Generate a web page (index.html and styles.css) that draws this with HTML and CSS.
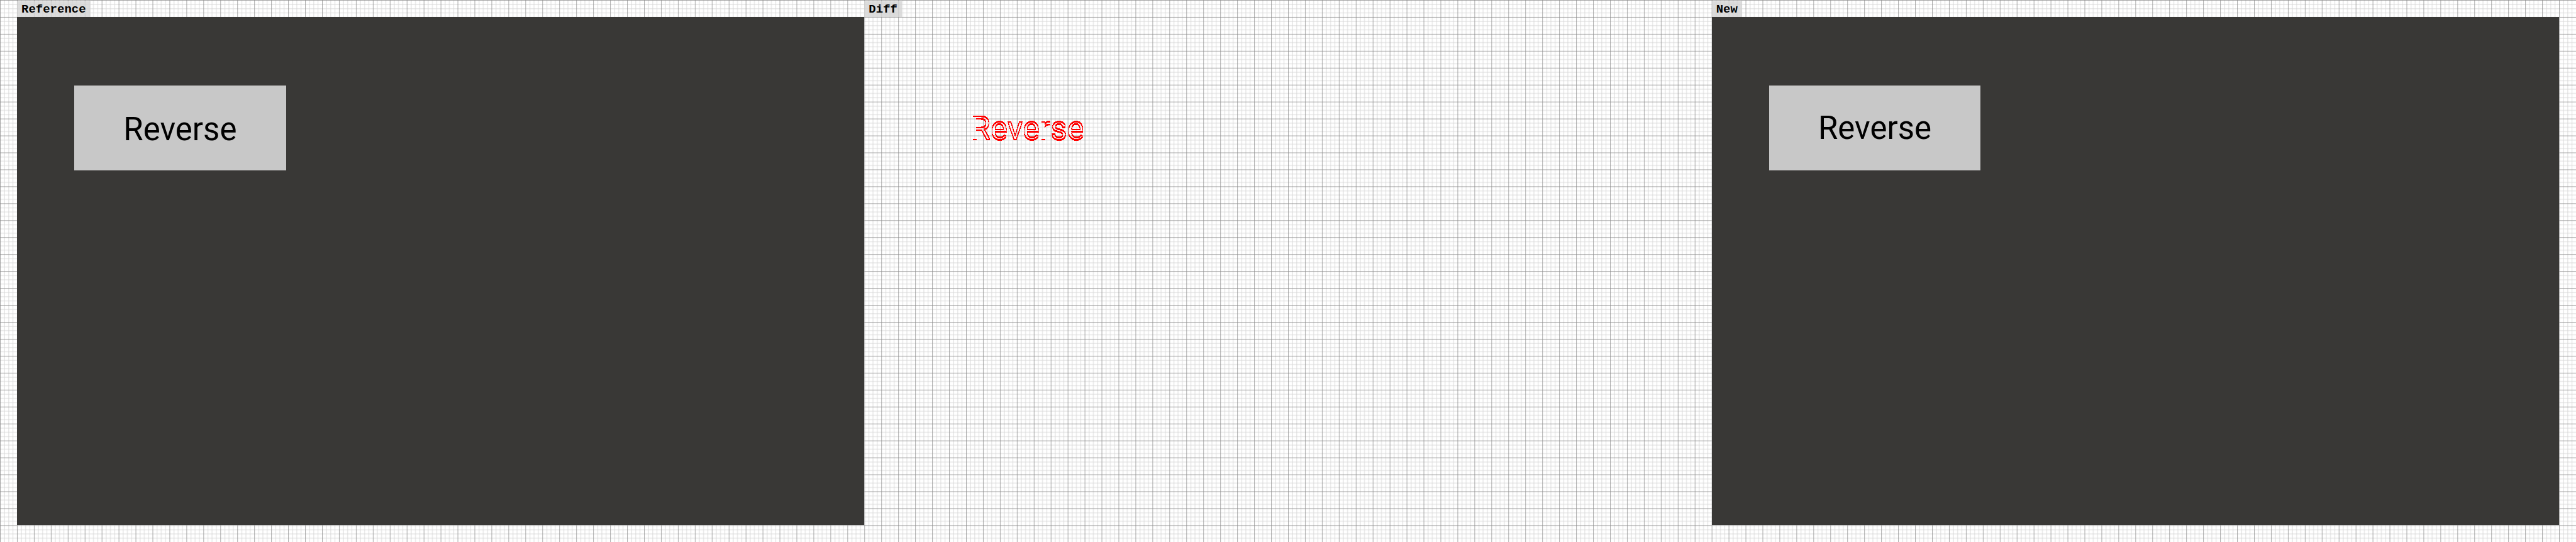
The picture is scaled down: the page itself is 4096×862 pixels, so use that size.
FILE: index.html
```html
<!DOCTYPE html>
<html lang="en">
<head>
<meta charset="utf-8">
<title>Image comparison</title>
<link rel="stylesheet" href="styles.css">
</head>
<body>
<svg class="grid" viewBox="0 0 4864 1024" preserveAspectRatio="xMinYMin slice" aria-hidden="true">
  <defs>
    <pattern id="lines" width="32" height="32" patternUnits="userSpaceOnUse">
      <path d="M8.5 0V32M16.5 0V32M24.5 0V32M0 8.5H32M0 16.5H32M0 24.5H32" fill="none" stroke="#d4d4d4"/>
      <path d="M.5 0V32M0 .5H32" fill="none" stroke="#8c8c8c"/>
    </pattern>
    <!-- Keeps only the pixels that change when the text moves down by 2px -->
    <filter id="edges" x="-5%" y="-10%" width="110%" height="120%" color-interpolation-filters="sRGB">
      <feOffset in="SourceGraphic" dy="2" result="shifted"/>
      <feComposite in="SourceGraphic" in2="shifted" operator="arithmetic" k2="1" k3="-1" result="upper"/>
      <feComposite in="shifted" in2="SourceGraphic" operator="arithmetic" k2="1" k3="-1" result="lower"/>
      <feComposite in="upper" in2="lower" operator="arithmetic" k2="1" k3="1"/>
      <feComponentTransfer><feFuncA type="linear" slope="12"/></feComponentTransfer>
    </filter>
  </defs>
  <rect width="4864" height="1024" fill="url(#lines)"/>
</svg>
<main class="comparison">
  <section class="panel">
    <h2 class="label">Reference</h2>
    <div class="screen screen-filled"><button class="tile tile-low" type="button">Reverse</button></div>
  </section>
  <section class="panel">
    <h2 class="label">Diff</h2>
    <div class="screen"><div class="tile tile-diff"><span class="outline">Reverse</span></div></div>
  </section>
  <section class="panel">
    <h2 class="label">New</h2>
    <div class="screen screen-filled"><button class="tile" type="button">Reverse</button></div>
  </section>
</main>
</body>
</html>
```

FILE: styles.css
```css
* { box-sizing: border-box; }

body {
  margin: 0;
  min-height: 100vh;
  background: #fff;
  overflow: hidden;
}

.grid {
  position: absolute;
  inset: 0;
  z-index: -1;
  width: 100%;
  height: 100%;
}

.comparison {
  display: grid;
  grid-template-columns: repeat(3, 1fr);
  padding: 0 27px 27px;
}

.label {
  width: fit-content;
  height: 25px;
  margin: 2px 0 0;
  padding: 0 7px;
  background: rgba(211, 211, 211, 0.8);
  font: bold 19px/27px "Courier New", "Liberation Mono", monospace;
  color: #000;
}

.screen {
  aspect-ratio: 5 / 3;
  padding: 8.125% 0 0 6.75%;
}

.screen-filled { background: #393836; }

.tile {
  display: flex;
  align-items: center;
  justify-content: center;
  width: 26.81%;
  aspect-ratio: 5 / 2;
  padding: 0;
  border: 0;
  background: #c8c8c8;
  font: 51px/60px Roboto, sans-serif;
  color: #000;
}

.tile-low { padding-top: 4px; }

.tile-diff {
  background: none;
  color: #f00;
}

.outline { filter: url(#edges); }
```
